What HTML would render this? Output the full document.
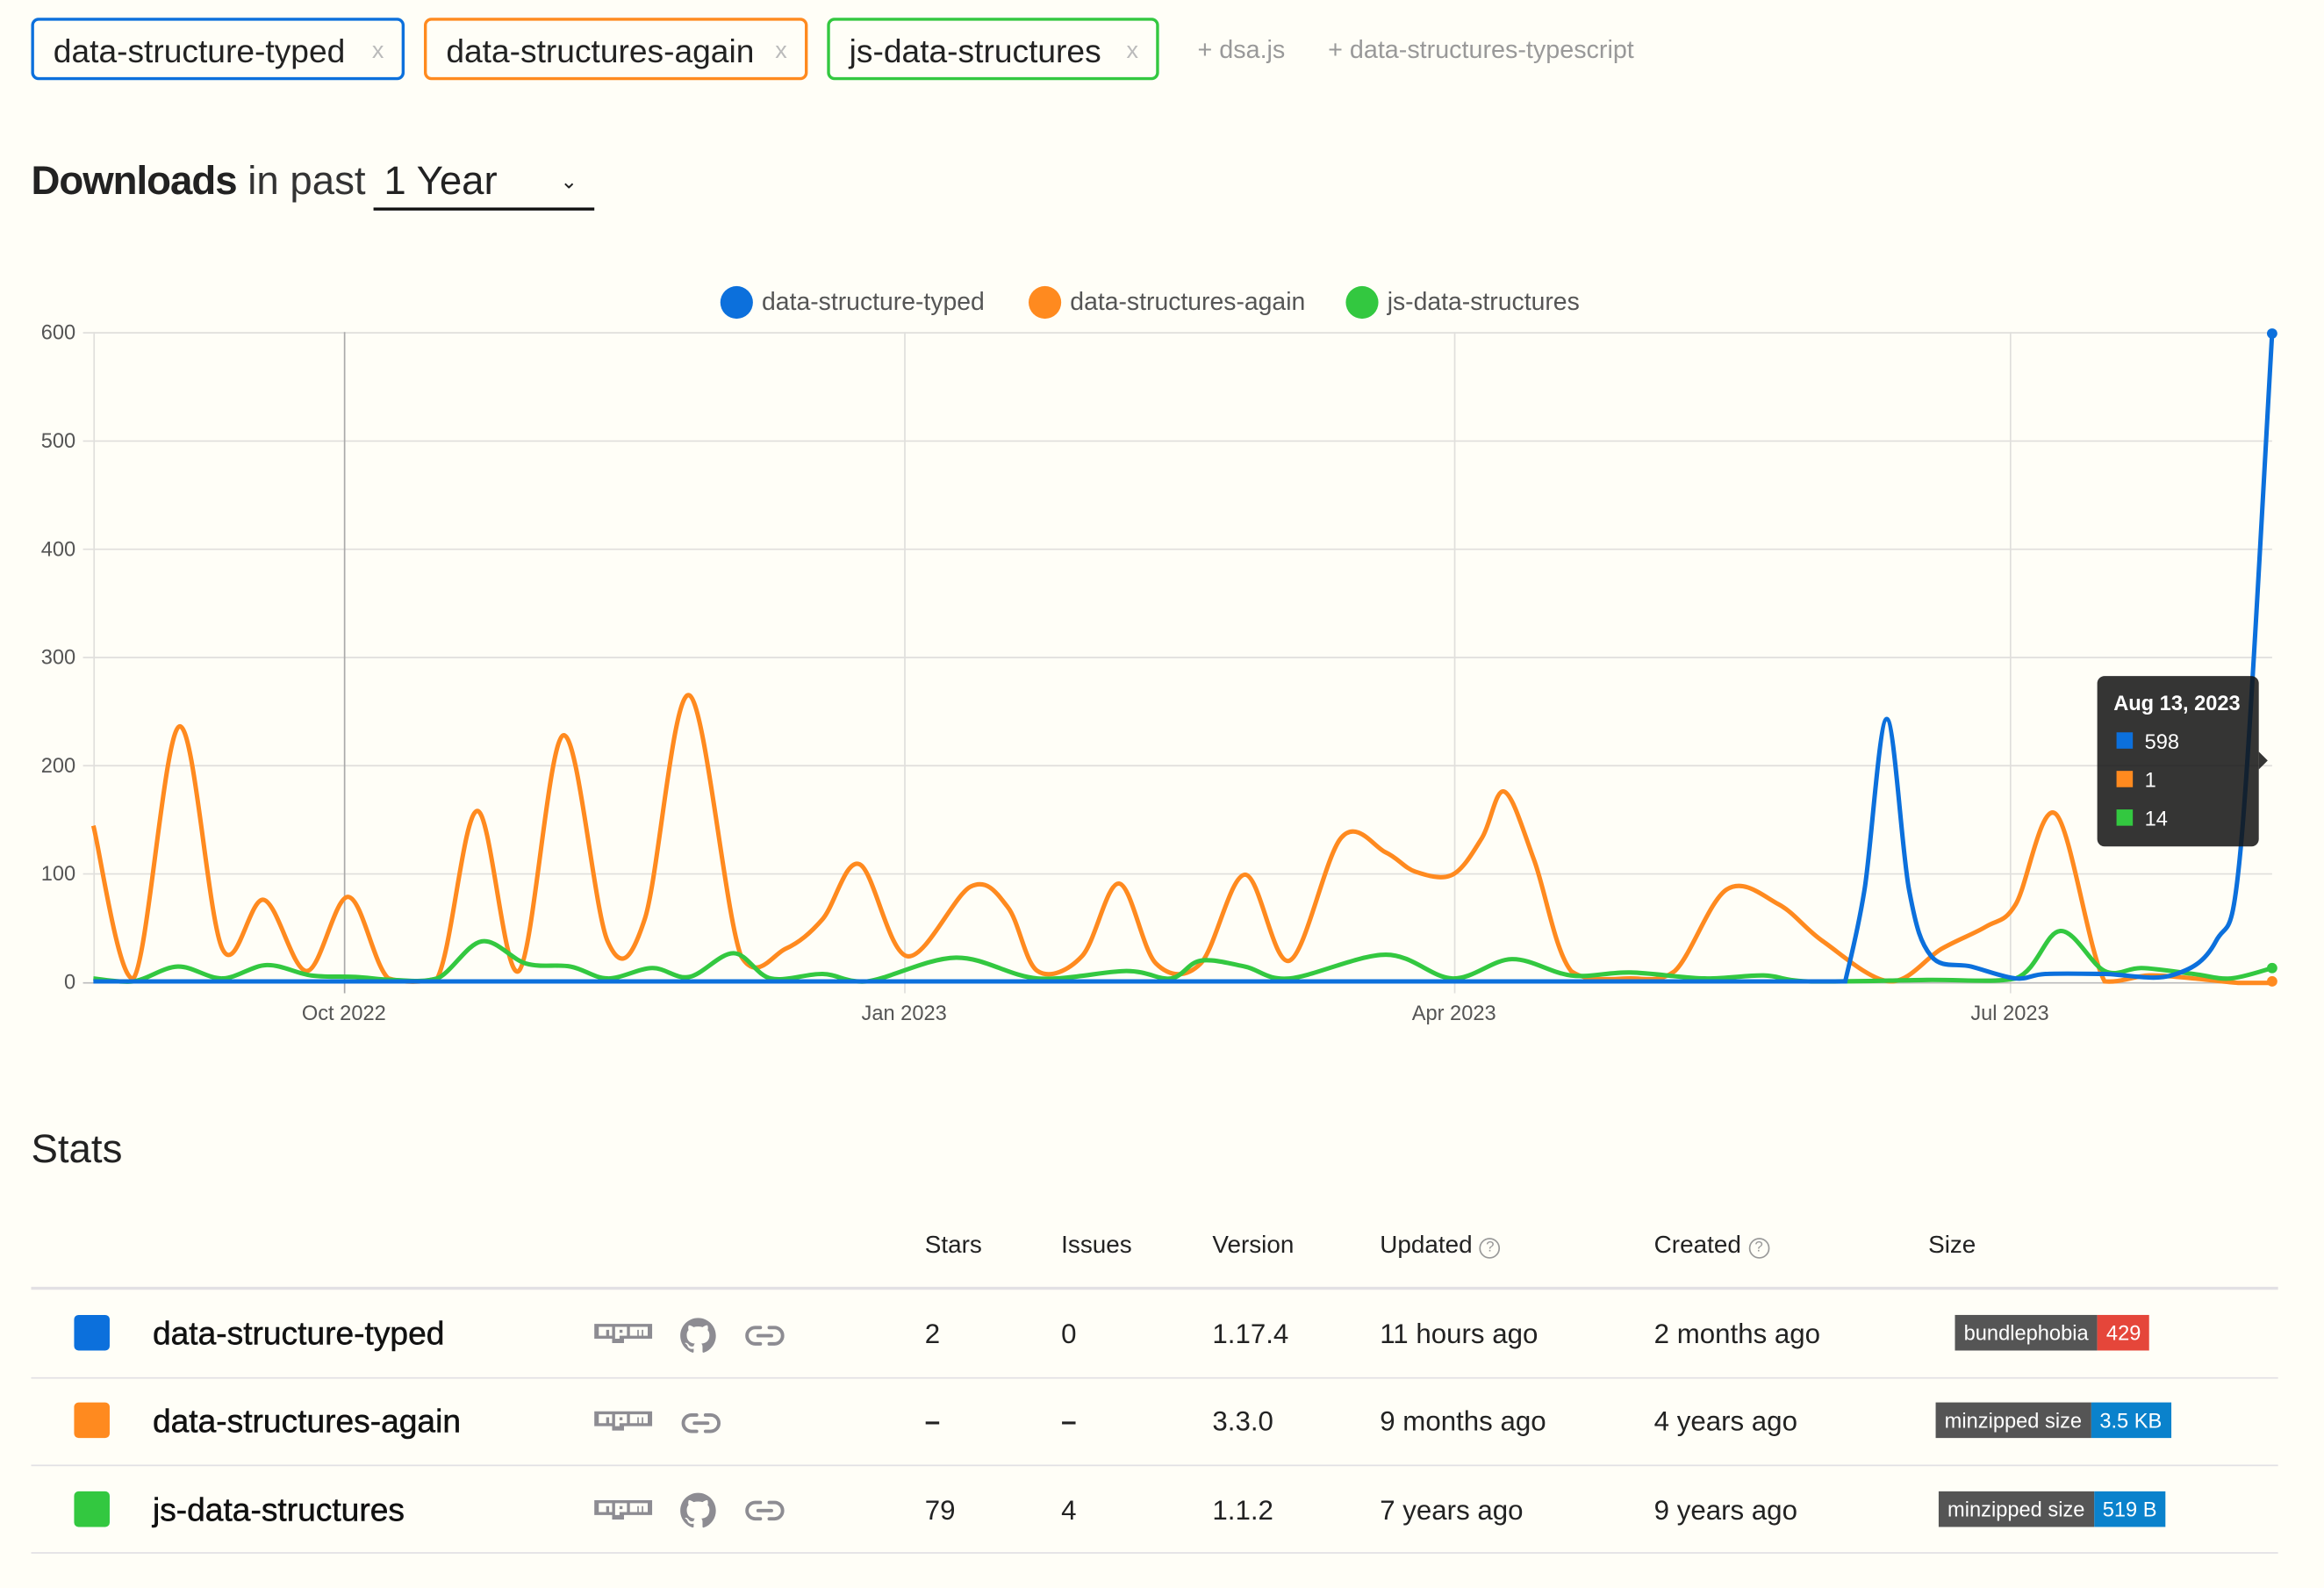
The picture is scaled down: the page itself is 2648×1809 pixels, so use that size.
<!DOCTYPE html>
<html><head><meta charset="utf-8">
<style>
html,body{margin:0;padding:0;background:#fffef7;}
body{width:2648px;height:1808px;overflow:hidden;}
#w{position:absolute;left:0;top:0;width:1568px;height:1071px;transform:scale(1.68878);transform-origin:0 0;font-family:"Liberation Sans",sans-serif;color:#222;}
.a{position:absolute;white-space:nowrap;}
.tag{position:absolute;top:12px;height:42px;border:2px solid;border-radius:5px;box-sizing:border-box;font-size:22px;line-height:42px;padding-left:13px;background:#fffef7;}
.tag span{color:#bbb;font-size:16px;position:absolute;right:12px;top:0;}
.add{position:absolute;top:24px;color:#999;font-size:17px;}
.hl{position:absolute;left:21px;width:1516px;height:1px;background:#e2e0e4;}
.sw{position:absolute;left:50px;width:24px;height:24px;border-radius:3px;}
.nm{position:absolute;left:103px;font-size:22px;-webkit-text-stroke:0.3px #111;color:#111;}
.c{position:absolute;font-size:18.5px;}
.h{position:absolute;top:831px;font-size:16.5px;}
.q{display:inline-block;width:12px;height:12px;border:1.5px solid #999;border-radius:50%;font-size:10px;line-height:12px;text-align:center;color:#999;vertical-align:1px;margin-left:5px;}
.bd{position:absolute;height:24px;font-size:14px;line-height:24px;color:#fff;display:flex;}
.bd b{font-weight:normal;background:#555;padding:0 6px;}
.bd i{font-style:normal;padding:0 6px;}
</style></head><body><div id="w">
<div class="tag" style="left:21px;width:252px;border-color:#0c70dc">data-structure-typed<span>x</span></div>
<div class="tag" style="left:286px;width:259px;border-color:#ff8a1f">data-structures-again<span>x</span></div>
<div class="tag" style="left:558px;width:224px;border-color:#33c840">js-data-structures<span>x</span></div>
<div class="add" style="left:808px">+ dsa.js</div>
<div class="add" style="left:896px">+ data-structures-typescript</div>

<div class="a" style="left:21px;top:107px;font-size:27px;"><b style="font-weight:bold;letter-spacing:-0.6px">Downloads</b><span style="color:#333"> in past</span></div>
<div class="a" style="left:259px;top:107px;font-size:27px;">1 Year</div>
<div class="a" style="left:378px;top:114px;font-size:14px;">&#8964;</div>
<div class="a" style="left:252px;top:140px;width:149px;height:2px;background:#111"></div>

<svg class="a" style="left:0;top:0" width="1568" height="720" viewBox="0 0 1568 720" font-family="Liberation Sans, sans-serif">
<g fill="#555" font-size="14">
<circle cx="497" cy="204" r="11" fill="#0c70dc"/><text x="514" y="209" font-size="16.8">data-structure-typed</text>
<circle cx="705" cy="204" r="11" fill="#ff8a1f"/><text x="722" y="209" font-size="16.8">data-structures-again</text>
<circle cx="919" cy="204" r="11" fill="#33c840"/><text x="936" y="209" font-size="16.8">js-data-structures</text>
<text x="51" y="229" text-anchor="end">600</text>
<text x="51" y="302" text-anchor="end">500</text>
<text x="51" y="375" text-anchor="end">400</text>
<text x="51" y="448" text-anchor="end">300</text>
<text x="51" y="521" text-anchor="end">200</text>
<text x="51" y="594" text-anchor="end">100</text>
<text x="51" y="667" text-anchor="end">0</text>
<text x="232" y="688" text-anchor="middle">Oct 2022</text>
<text x="610" y="688" text-anchor="middle">Jan 2023</text>
<text x="981" y="688" text-anchor="middle">Apr 2023</text>
<text x="1356" y="688" text-anchor="middle">Jul 2023</text>
</g>
<g stroke="#e0dfdc" stroke-width="1">
<line x1="56" x2="1533" y1="224.5" y2="224.5"/><line x1="56" x2="1533" y1="297.5" y2="297.5"/>
<line x1="56" x2="1533" y1="370.5" y2="370.5"/><line x1="56" x2="1533" y1="443.5" y2="443.5"/>
<line x1="56" x2="1533" y1="516.5" y2="516.5"/><line x1="56" x2="1533" y1="589.5" y2="589.5"/>
<line x1="63.5" x2="63.5" y1="224" y2="663"/>
<line x1="610.5" x2="610.5" y1="224" y2="670"/><line x1="981.5" x2="981.5" y1="224" y2="670"/><line x1="1356.5" x2="1356.5" y1="224" y2="670"/>
</g>
<line x1="232.5" x2="232.5" y1="224" y2="670" stroke="#aaa"/>
<line x1="56" x2="1533" y1="663" y2="663" stroke="#bbb"/>
<path id="po" fill="none" stroke="#ff8a1f" stroke-width="3"/>
<path id="pg" fill="none" stroke="#33c840" stroke-width="3"/>
<path id="pb" fill="none" stroke="#0c70dc" stroke-width="3"/>
<circle cx="1533" cy="225" r="3.5" fill="#0c70dc"/>
<circle cx="1533" cy="662" r="3.5" fill="#ff8a1f"/>
<circle cx="1533" cy="653" r="3.5" fill="#33c840"/>
<g>
<rect x="1415" y="456" width="109" height="115" rx="5" fill="rgba(20,20,20,0.86)"/>
<path d="M1524 507 L1530 513 L1524 519 Z" fill="rgba(20,20,20,0.86)"/>
<text x="1426" y="479" fill="#fff" font-size="14" font-weight="bold">Aug 13, 2023</text>
<rect x="1428" y="494" width="11" height="11" fill="#0c70dc"/><text x="1447" y="505" fill="#fff" font-size="14">598</text>
<rect x="1428" y="520" width="11" height="11" fill="#ff8a1f"/><text x="1447" y="531" fill="#fff" font-size="14">1</text>
<rect x="1428" y="546" width="11" height="11" fill="#33c840"/><text x="1447" y="557" fill="#fff" font-size="14">14</text>
</g>
</svg>

<div class="a" style="left:21px;top:760px;font-size:27px;">Stats</div>
<div class="h" style="left:624px">Stars</div>
<div class="h" style="left:716px">Issues</div>
<div class="h" style="left:818px">Version</div>
<div class="h" style="left:931px">Updated<span class="q">?</span></div>
<div class="h" style="left:1116px">Created<span class="q">?</span></div>
<div class="h" style="left:1301px">Size</div>
<div class="hl" style="top:868px;height:2px"></div>
<div class="hl" style="top:929px"></div>
<div class="hl" style="top:988px"></div>
<div class="hl" style="top:1047px"></div>

<div class="sw" style="top:887px;background:#0c70dc"></div>
<div class="nm" style="top:887px">data-structure-typed</div>
<div class="sw" style="top:946px;background:#ff8a1f"></div>
<div class="nm" style="top:946px">data-structures-again</div>
<div class="sw" style="top:1006px;background:#33c840"></div>
<div class="nm" style="top:1006px">js-data-structures</div>

<svg class="a" style="left:0;top:0" width="1568" height="1071">
<g fill="#8d8c92">
<g transform="translate(401,893)"><path d="M0 0h39v10h-19v3h-8v-3h-12z M3 2v6h5v-4h2v4h2v-6z M14 2v8h3v-2h5v-6z M17 4h2v2h-2z M24 2v6h5v-4h1v4h2v-4h1v4h3v-6z" fill-rule="evenodd"/></g>
<g transform="translate(401,952)"><path d="M0 0h39v10h-19v3h-8v-3h-12z M3 2v6h5v-4h2v4h2v-6z M14 2v8h3v-2h5v-6z M17 4h2v2h-2z M24 2v6h5v-4h1v4h2v-4h1v4h3v-6z" fill-rule="evenodd"/></g>
<g transform="translate(401,1012)"><path d="M0 0h39v10h-19v3h-8v-3h-12z M3 2v6h5v-4h2v4h2v-6z M14 2v8h3v-2h5v-6z M17 4h2v2h-2z M24 2v6h5v-4h1v4h2v-4h1v4h3v-6z" fill-rule="evenodd"/></g>
<g transform="translate(459,889) scale(1.5)"><path d="M8 0C3.58 0 0 3.58 0 8c0 3.54 2.29 6.53 5.47 7.59.4.07.55-.17.55-.38v-1.33c-2.23.48-2.7-1.07-2.7-1.07-.36-.92-.89-1.17-.89-1.17-.73-.5.06-.49.06-.49.8.06 1.23.82 1.23.82.72 1.22 1.870.87 2.33.66.07-.52.28-.87.51-1.07-1.78-.2-3.65-.89-3.65-3.95 0-.87.31-1.59.82-2.15-.08-.2-.36-1.02.08-2.12 0 0 .67-.21 2.2.82.64-.18 1.32-.27 2-.27.68 0 1.36.09 2 .27 1.53-1.04 2.2-.82 2.2-.82.44 1.1.16 1.92.08 2.12.51.56.82 1.27.82 2.15 0 3.07-1.87 3.75-3.65 3.95.29.25.54.73.54 1.48v2.2c0 .21.15.46.55.38A8.013 8.013 0 0016 8c0-4.42-3.58-8-8-8z"/></g>
<g transform="translate(459,1007) scale(1.5)"><path d="M8 0C3.58 0 0 3.58 0 8c0 3.54 2.29 6.53 5.47 7.59.4.07.55-.17.55-.38v-1.33c-2.23.48-2.7-1.07-2.7-1.07-.36-.92-.89-1.17-.89-1.17-.73-.5.06-.49.06-.49.8.06 1.23.82 1.23.82.72 1.22 1.87.87 2.33.66.07-.52.28-.87.51-1.07-1.78-.2-3.65-.89-3.65-3.95 0-.87.31-1.59.82-2.15-.08-.2-.36-1.02.08-2.12 0 0 .67-.21 2.2.82.64-.18 1.32-.27 2-.27.68 0 1.36.09 2 .27 1.53-1.04 2.2-.82 2.2-.82.44 1.1.16 1.92.08 2.12.51.56.82 1.27.82 2.15 0 3.07-1.87 3.75-3.65 3.95.29.25.54.73.54 1.48v2.2c0 .21.15.46.55.38A8.013 8.013 0 0016 8c0-4.42-3.58-8-8-8z"/></g>
</g>
<g fill="none" stroke="#8d8c92" stroke-width="2.3" stroke-linecap="round">
<path d="M513 895.5h-3.5a5.5 5.5 0 0 0 0 11h3.5 M519 895.5h3.5a5.5 5.5 0 0 1 0 11h-3.5 M511.5 901h9"/>
<path d="M470 954.5h-3.5a5.5 5.5 0 0 0 0 11h3.5 M476 954.5h3.5a5.5 5.5 0 0 1 0 11h-3.5 M468.5 960h9"/>
<path d="M513 1013.5h-3.5a5.5 5.5 0 0 0 0 11h3.5 M519 1013.5h3.5a5.5 5.5 0 0 1 0 11h-3.5 M511.5 1019h9"/>
</g>
</svg>

<div class="c" style="left:624px;top:889px">2</div>
<div class="c" style="left:716px;top:889px">0</div>
<div class="c" style="left:818px;top:889px">1.17.4</div>
<div class="c" style="left:931px;top:889px">11 hours ago</div>
<div class="c" style="left:1116px;top:889px">2 months ago</div>
<div class="bd" style="left:1319px;top:887px"><b>bundlephobia</b><i style="background:#e5463a">429</i></div>

<div class="c" style="left:624px;top:948px;font-weight:bold">–</div>
<div class="c" style="left:716px;top:948px;font-weight:bold">–</div>
<div class="c" style="left:818px;top:948px">3.3.0</div>
<div class="c" style="left:931px;top:948px">9 months ago</div>
<div class="c" style="left:1116px;top:948px">4 years ago</div>
<div class="bd" style="left:1306px;top:946px"><b>minzipped size</b><i style="background:#0a82cc">3.5 KB</i></div>

<div class="c" style="left:624px;top:1008px">79</div>
<div class="c" style="left:716px;top:1008px">4</div>
<div class="c" style="left:818px;top:1008px">1.1.2</div>
<div class="c" style="left:931px;top:1008px">7 years ago</div>
<div class="c" style="left:1116px;top:1008px">9 years ago</div>
<div class="bd" style="left:1308px;top:1006px"><b>minzipped size</b><i style="background:#0a82cc">519 B</i></div>
</div>
<script>
function sm(p){var d="M"+p[0][0]+" "+p[0][1];for(var i=0;i<p.length-1;i++){var p0=p[i-1]||p[i],p1=p[i],p2=p[i+1],p3=p[i+2]||p2;var t=6;
var c1x=p1[0]+(p2[0]-p0[0])/t,c1y=p1[1]+(p2[1]-p0[1])/t,c2x=p2[0]-(p3[0]-p1[0])/t,c2y=p2[1]-(p3[1]-p1[1])/t;
c1y=Math.min(c1y,663);c2y=Math.min(c2y,663);
d+=" C"+c1x.toFixed(1)+" "+c1y.toFixed(1)+" "+c2x.toFixed(1)+" "+c2y.toFixed(1)+" "+p2[0]+" "+p2[1];}return d;}
var O=[[63,557],[90,660],[121,490],[150,640],[178,607],[207,655],[235,605],[262,660],[295,660],[322,547],[350,655],[380,496],[410,635],[435,620],[465,469],[500,645],[530,640],[555,620],[580,583],[612,645],[655,598],[680,612],[700,655],[730,645],[755,596],[780,650],[810,650],[840,590],[870,648],[905,565],[935,575],[955,588],[980,590],[1000,565],[1015,534],[1035,580],[1060,655],[1100,660],[1130,655],[1165,600],[1200,610],[1230,635],[1275,662],[1310,640],[1340,625],[1360,610],[1387,549],[1420,662],[1450,658],[1480,660],[1510,663],[1533,663]];
var G=[[63,660],[90,662],[120,652],[150,660],[180,651],[210,658],[240,659],[265,661],[295,660],[325,635],[355,650],[385,652],[410,660],[440,653],[465,659],[495,643],[520,660],[555,657],[585,662],[645,646],[700,660],[760,655],[790,660],[810,648],[840,652],[870,660],[935,644],[980,660],[1020,647],[1060,658],[1100,656],[1150,660],[1190,658],[1220,662],[1300,661],[1360,660],[1390,628],[1420,655],[1445,653],[1480,657],[1505,660],[1533,653]];
var B=[[63,662],[1245,662],[1258,600],[1273,485],[1288,600],[1303,645],[1330,652],[1360,660],[1380,657],[1420,657],[1465,658],[1495,635],[1512,570],[1533,225]];
document.getElementById('po').setAttribute('d',sm(O));
document.getElementById('pg').setAttribute('d',sm(G));
document.getElementById('pb').setAttribute('d',"M63 662 L1245 662 "+sm(B.slice(1)).replace(/^M/,"L"));
</script>
</body></html>
